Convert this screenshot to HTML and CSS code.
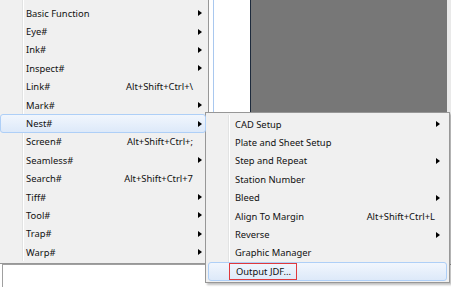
FILE: index.html
```html
<!DOCTYPE html>
<html lang="en">
<head>
  <meta charset="UTF-8" />
  <title>Nest menu</title>
  <link rel="stylesheet" href="styles.css">
</head>
<body>

<div class="app">
  <div class="workspace">
    <div class="side-strip"></div>
    <div class="canvas"></div>
    <div class="edge"></div>
  </div>
  <div class="bottom-pane"></div>

  <!-- main context menu -->
  <ul class="menu main-menu">
    <li class="item"><span class="label">Basic Function</span><span class="arrow"></span></li>
    <li class="item"><span class="label">Eye#</span><span class="arrow"></span></li>
    <li class="item"><span class="label">Ink#</span><span class="arrow"></span></li>
    <li class="item"><span class="label">Inspect#</span><span class="arrow"></span></li>
    <li class="item"><span class="label">Link#</span><span class="key">Alt+Shift+Ctrl+\</span></li>
    <li class="item"><span class="label">Mark#</span><span class="arrow"></span></li>
    <li class="item active"><span class="label">Nest#</span><span class="arrow"></span></li>
    <li class="item"><span class="label">Screen#</span><span class="key">Alt+Shift+Ctrl+;</span></li>
    <li class="item"><span class="label">Seamless#</span><span class="arrow"></span></li>
    <li class="item"><span class="label">Search#</span><span class="key">Alt+Shift+Ctrl+7</span></li>
    <li class="item"><span class="label">Tiff#</span><span class="arrow"></span></li>
    <li class="item"><span class="label">Tool#</span><span class="arrow"></span></li>
    <li class="item"><span class="label">Trap#</span><span class="arrow"></span></li>
    <li class="item"><span class="label">Warp#</span><span class="arrow"></span></li>
  </ul>

  <!-- Nest# submenu -->
  <ul class="menu sub-menu">
    <li class="item"><span class="label">CAD Setup</span><span class="arrow"></span></li>
    <li class="item"><span class="label">Plate and Sheet Setup</span></li>
    <li class="item"><span class="label">Step and Repeat</span><span class="arrow"></span></li>
    <li class="item"><span class="label">Station Number</span></li>
    <li class="item"><span class="label">Bleed</span><span class="arrow"></span></li>
    <li class="item"><span class="label">Align To Margin</span><span class="key">Alt+Shift+Ctrl+L</span></li>
    <li class="item"><span class="label">Reverse</span><span class="arrow"></span></li>
    <li class="item"><span class="label">Graphic Manager</span></li>
    <li class="item active"><span class="label marked">Output JDF...</span></li>
  </ul>
</div>

</body>
</html>
```

FILE: styles.css
```css
html, body {
  margin: 0;
  padding: 0;
  background: #ffffff;
}
body {
  font-family: "Segoe UI", "Noto Sans", sans-serif;
  font-size: 9.4px;
  color: #111111;
}
.app {
  position: relative;
  width: 451px;
  height: 287px;
  overflow: hidden;
  background: #ffffff;
}

/* background window */
.workspace {
  display: flex;
  height: 264px;
  padding-left: 213px;
}
.side-strip {
  width: 36px;
  background: #ffffff;
  border-left: 1px solid #a9c8ef;
}
.canvas {
  flex: 1;
  background: #777777;
  border-left: 1px solid #1d2a3c;
}
.edge {
  width: 4px;
  background: #e9e9e9;
}
.bottom-pane {
  height: 22px;
  margin-left: 2px;
  border-top: 1px solid #a0a0a0;
  border-left: 1px solid #a0a0a0;
  background: #ffffff;
}

/* menus */
.menu {
  position: absolute;
  margin: 0;
  padding: 0;
  list-style: none;
  background: #f0f0f0;
  box-sizing: border-box;
}
.menu::before {
  content: "";
  position: absolute;
  top: 2px;
  bottom: 2px;
  width: 1px;
  background: #e2e3e3;
  box-shadow: 1px 0 0 #ffffff;
}
.main-menu {
  left: -2px;
  top: -3px;
  width: 211px;
  height: 267px;
  padding: 7px 2px 2px 2px;
  border-right: 1px solid #979797;
  border-bottom: 1px solid #979797;
}
.main-menu::before {
  left: 24px;
}
.sub-menu {
  left: 205px;
  top: 112px;
  width: 245px;
  height: 171px;
  padding: 2px;
  border: 1px solid #979797;
  box-shadow: 2px 2px 2px rgba(0, 0, 0, 0.25);
}
.sub-menu::before {
  left: 22px;
}
.item {
  position: relative;
  display: flex;
  align-items: center;
  height: 18.4px;
  padding-left: 26px;
  padding-right: 3px;
  box-sizing: border-box;
  border: 1px solid transparent;
  border-radius: 3px;
}
.main-menu .item {
  padding-left: 25px;
}
.sub-menu .item {
  padding-left: 26px;
  padding-right: 6px;
}
.item.active {
  background: linear-gradient(#f1f6fd, #dde9f9);
  border-color: #aecff7;
  z-index: 1;
}
.label {
  flex: 1;
  white-space: nowrap;
}
.key {
  white-space: nowrap;
  margin-right: 9px;
}
.sub-menu .key {
  margin-right: 5px;
}
.arrow {
  width: 0;
  height: 0;
  border-top: 3.5px solid transparent;
  border-bottom: 3.5px solid transparent;
  border-left: 4px solid #000000;
}
.marked {
  flex: none;
  margin-left: -6px;
  padding: 1px 5px 1px 6px;
  border: 1px solid #e0393d;
}
```
